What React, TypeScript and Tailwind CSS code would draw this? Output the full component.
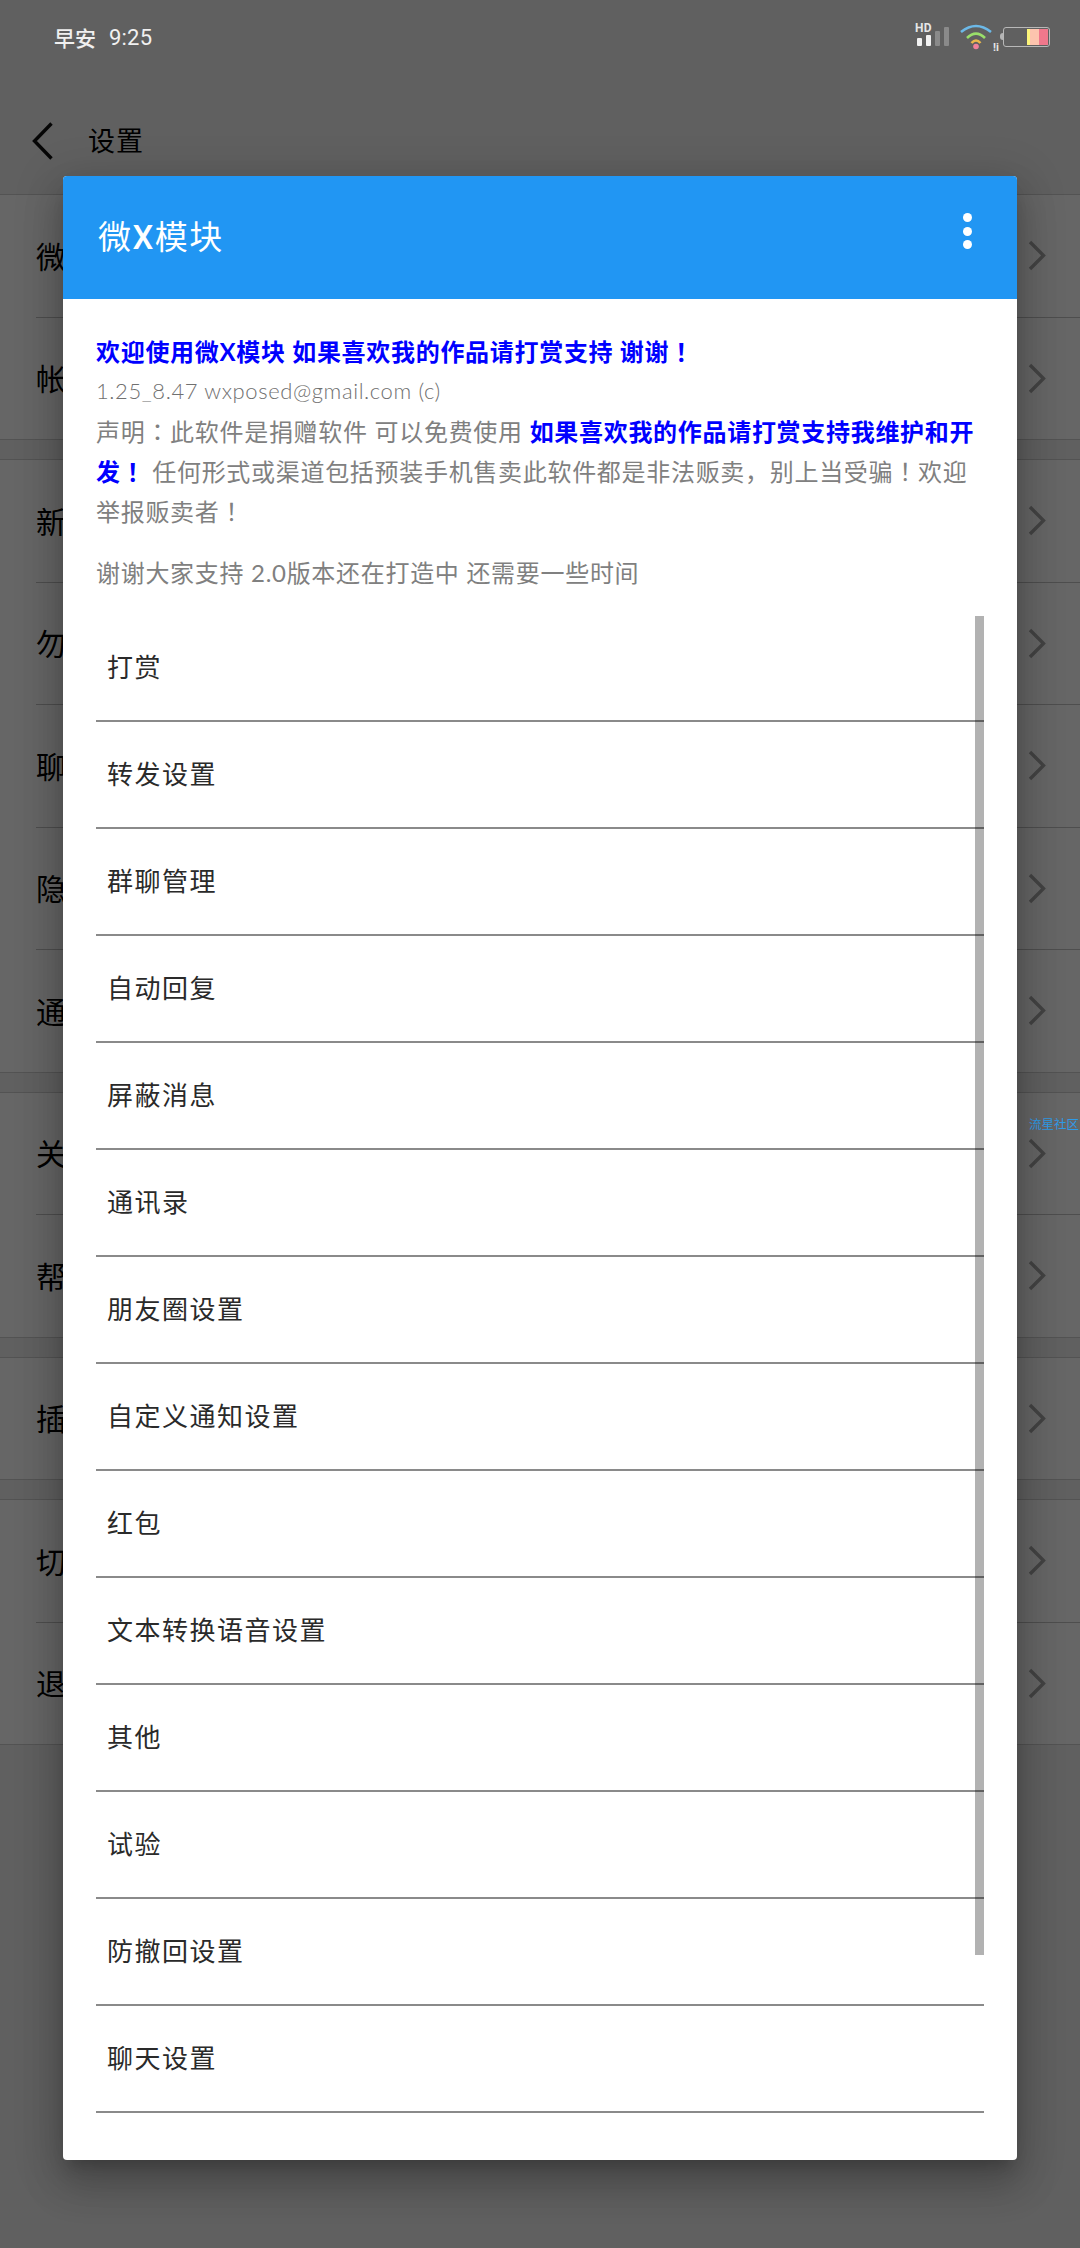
const FONT = "font-['Lato','Noto_Sans_CJK_SC',sans-serif]";

const Chevron = () => (
  <svg width="18" height="32" viewBox="0 0 18 32" className="shrink-0" fill="none">
    <polyline points="2,2 15.5,15.5 2,29" stroke="#a8a8a8" strokeWidth="3.4" />
  </svg>
);

const Row = ({ label, last }: { label: string; last?: boolean }) => (
  <div className={`relative h-[122.5px] flex items-center justify-between pl-[36px] pr-[34px] bg-white after:absolute after:right-0 after:bottom-0 after:h-px ${last ? "after:left-0 after:bg-[#d0d0d0]" : "after:left-[36px] after:bg-[#c4c4c4]"}`}>
    <span className="text-[30px] text-black">{label}</span>
    <Chevron />
  </div>
);

const Section = ({ labels, first }: { labels: string[]; first?: boolean }) => (
  <div className={first ? "" : "border-t border-[#d0d0d0] mt-[19px]"}>
    {labels.map((l, i) => (
      <Row key={l} label={l} last={i === labels.length - 1} />
    ))}
  </div>
);

const MENU = ["打赏", "转发设置", "群聊管理", "自动回复", "屏蔽消息", "通讯录", "朋友圈设置", "自定义通知设置", "红包", "文本转换语音设置", "其他", "试验", "防撤回设置", "聊天设置"];

const Bang = () => <span className="font-['Noto_Sans_CJK_TC',sans-serif]">！</span>;

const StatusIcons = () => (
  <div className="flex items-start">
    <div className="relative w-[36px] h-[24px]">
      <span className="absolute left-0 top-[-4px] text-[12px] leading-[12px] font-bold text-[#e6e6e6] font-['Roboto',sans-serif] tracking-[0.3px]">HD</span>
      <svg width="36" height="24" viewBox="0 0 36 24" className="absolute left-0 top-0">
        <rect x="2" y="12" width="5" height="8" rx="1" fill="#f2f2f2" />
        <rect x="11" y="9" width="5" height="11" rx="1" fill="#f2f2f2" />
        <rect x="20" y="5" width="5" height="15" rx="1" fill="#8a8a8a" />
        <rect x="29" y="1" width="5" height="19" rx="1" fill="#8a8a8a" />
      </svg>
    </div>
    <svg width="36" height="28" viewBox="0 0 36 28" className="ml-[8px] mt-[-3px]" fill="none">
      <path d="M2 9 Q17 -3 32 9" stroke="#6cb9e8" strokeWidth="2.6" />
      <path d="M8 15 Q17 6 26 15" stroke="#9ade6a" strokeWidth="2.6" />
      <path d="M12.5 20 Q17 15 21.5 20" stroke="#eab84c" strokeWidth="2.6" />
      <circle cx="17" cy="23.5" r="2.8" fill="#f0809a" />
    </svg>
    <span className="ml-[-2px] mt-[16px] text-[11px] leading-[11px] font-bold text-[#e6e6e6] font-['Roboto',sans-serif]">!i</span>
    <div className="ml-[1px] mt-[7px] w-[3px] h-[7px] bg-[#b5b5b5] rounded-l-sm" />
    <div className="mt-[1px] w-[47px] h-[20px] border border-[#b8b8b8] rounded-[3px] flex justify-end overflow-hidden p-px">
      <div className="w-[3px] bg-[#fdf57a]" />
      <div className="w-[9px] bg-[#fdc4ae]" />
      <div className="w-[9px] bg-[#f0788c]" />
    </div>
  </div>
);

export default function App() {
  return (
    <div className={`relative w-[1080px] h-[2248px] overflow-hidden bg-[#f0f0f0] ${FONT}`}>
      {/* settings page underneath: only the part of each label that shows beside the dialog */}
      <div className="h-[195px] border-b border-[#d0d0d0] flex items-end pb-[34px] pl-[32px]">
        <svg width="22" height="38" viewBox="0 0 22 38" fill="none">
          <polyline points="19.5,1.5 2.5,19 19.5,36.5" stroke="#111" strokeWidth="3.4" />
        </svg>
        <span className="ml-[34px] text-[27px] leading-[38px] tracking-[1px] text-black">设置</span>
      </div>
      <Section first labels={["微", "帐"]} />
      <Section labels={["新", "勿", "聊", "隐", "通"]} />
      <Section labels={["关", "帮"]} />
      <Section labels={["插"]} />
      <Section labels={["切", "退"]} />

      {/* dim */}
      <div className="absolute inset-0 bg-black/60" />

      {/* status bar */}
      <div className="absolute left-[54px] top-[25px] flex items-center text-[#f0f0f0] leading-[26px]">
        <span className="text-[21px] font-medium">早安</span>
        <span className="ml-[13px] text-[22px] tracking-[0.2px] font-['Roboto',sans-serif]">9:25</span>
      </div>
      <div className="absolute left-[915px] top-[26px]">
        <StatusIcons />
      </div>

      {/* watermark */}
      <span className="absolute left-[1029px] top-[1117px] text-[12.5px] leading-[16px] whitespace-nowrap text-[#2f9be8]">流星社区</span>

      {/* dialog */}
      <div className="absolute left-[63px] top-[176px] w-[954px] h-[1984px] bg-white rounded-[4px] overflow-visible shadow-[0_24px_38px_3px_rgba(0,0,0,0.17),0_9px_46px_8px_rgba(0,0,0,0.14),0_11px_15px_-7px_rgba(0,0,0,0.2)]">
        <div className="h-[123px] bg-[#2196f3] rounded-t-[4px] flex items-center justify-between pl-[35px] pr-[45px]">
          <span className="text-[33px] tracking-[1.5px] text-white leading-[40px] font-['Roboto','Noto_Sans_CJK_SC',sans-serif]">
            微<span className="font-medium">X</span>模块
          </span>
          <div className="flex flex-col gap-[4.5px] mb-[13px]">
            <span className="size-[9px] rounded-full bg-white" />
            <span className="size-[9px] rounded-full bg-white" />
            <span className="size-[9px] rounded-full bg-white" />
          </div>
        </div>
        <div className="pt-[32px] px-[33px] text-[24px] leading-[40px] tracking-[0.7px] text-[#808080] whitespace-nowrap">
          <div className="h-[40px] font-bold text-[#0000ff]">
            欢迎使用微X模块 如果喜欢我的作品请打赏支持 谢谢<Bang />
          </div>
          <div className="h-[40px] font-light text-[22px] tracking-[0.6px] text-[#707070]">1.25_8.47 wxposed@gmail.com (c)</div>
          <div className="h-[40px]">
            声明<span className="font-['Noto_Sans_CJK_TC',sans-serif]">：</span>此软件是捐赠软件 可以免费使用{" "}
            <b className="text-[#0000ff]">如果喜欢我的作品请打赏支持我维护和开</b>
          </div>
          <div className="h-[40px]">
            <b className="text-[#0000ff]">
              发<Bang />
            </b>{" "}
            任何形式或渠道包括预装手机售卖此软件都是非法贩卖，别上当受骗<Bang />欢迎
          </div>
          <div className="h-[40px]">
            举报贩卖者<Bang />
          </div>
          <div className="h-[40px] mt-[22px]">谢谢大家支持 2.0版本还在打造中 还需要一些时间</div>
        </div>
        <div className="relative mt-[22px] mx-[33px]">
          {MENU.map((m) => (
            <div key={m} className="h-[107px] border-b-2 border-[#8a8a8a] flex items-center pl-[11px] text-[26px] tracking-[1.5px] text-[#2a2a2a]">
              {m}
            </div>
          ))}
          <div className="absolute right-0 top-[1px] w-[9px] h-[1339px] bg-black/30" />
        </div>
      </div>
    </div>
  );
}
